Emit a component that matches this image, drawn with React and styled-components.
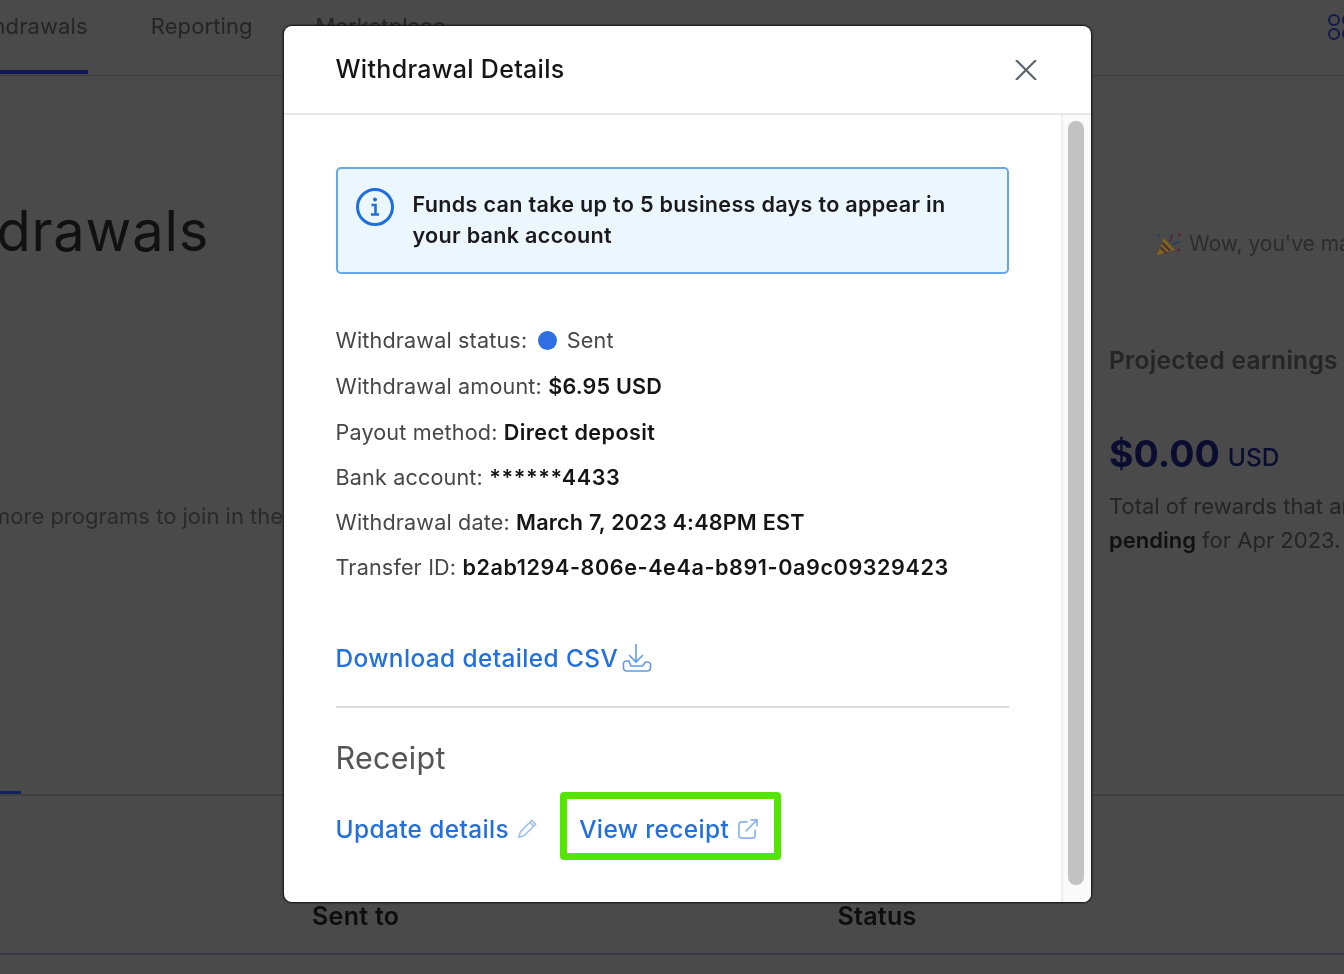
import styled, { createGlobalStyle } from "styled-components";

const GlobalStyle = createGlobalStyle`
  html, body {
    margin: 0;
    padding: 0;
    background: #4a4a4a;
    font-family: "Inter", "Liberation Sans", sans-serif;
    overflow: hidden;
  }
  * { box-sizing: border-box; }
`;

const Screen = styled.div`
  position: relative;
  width: 1344px;
  height: 974px;
  overflow: hidden;
  background: #4a4a4a;
  filter: blur(0.45px);
`;

/* dimmed dashboard behind the modal */
const TopNav = styled.div`
  height: 76px;
  border-bottom: 1px solid #3e3e3e;
  display: flex;
  gap: 63px;
  margin-left: -42px;
  position: relative;
`;
const NavTab = styled.div`
  height: 74px;
  padding-top: 12px;
  font-size: 22px;
  line-height: 28px;
  color: #252525;
  letter-spacing: 0.1px;
  white-space: nowrap;
  border-bottom: 4px solid ${(p) => (p.$active ? "#10185c" : "transparent")};
`;
const GridIcon = styled.svg`
  margin-left: auto;
  margin-right: -17px;
  margin-top: 12px;
  flex: none;
`;
const TitleBand = styled.div`
  height: 241px;
  border-bottom: 1px solid #464646;
  display: flex;
  justify-content: space-between;
  margin-left: -127px;
`;
const PageTitle = styled.h1`
  margin: 120px 0 0;
  font-size: 56px;
  line-height: 70px;
  font-weight: 400;
  letter-spacing: 0.8px;
  color: #111;
`;
const Wow = styled.div`
  margin: 148px -60px 0 0;
  width: 249px;
  height: 40px;
  display: flex;
  align-items: center;
  gap: 7px;
  font-size: 21px;
  line-height: 28px;
  color: #2c2c2c;
  white-space: nowrap;
  overflow: hidden;
`;
const PartySvg = styled.svg`
  flex: none;
`;
const Middle = styled.div`
  height: 338px;
  display: flex;
  border-bottom: 1px solid #474747;
`;
const ProgramsNote = styled.div`
  flex: 1;
  margin-left: -9px;
  padding-top: 185px;
  font-size: 22px;
  line-height: 28px;
  color: #2a2a2a;
  white-space: nowrap;
  overflow: hidden;
`;
const EarningsCard = styled.div`
  width: 253px;
  overflow: hidden;
  white-space: nowrap;
`;
const CardHead = styled.div`
  height: 89px;
  padding: 28px 0 0 18px;
  border-bottom: 1px solid #464646;
  font-size: 24.5px;
  letter-spacing: 0.3px;
  line-height: 30px;
  font-weight: 600;
  color: #252525;
`;
const Amount = styled.div`
  padding: 23px 0 0 18px;
  font-size: 37.5px;
  line-height: 50px;
  font-weight: 700;
  color: #0a0c30;
`;
const AmountUnit = styled.span`
  font-size: 24.5px;
  font-weight: 500;
  margin-left: 8px;
  vertical-align: 1px;
`;
const CardText = styled.div`
  padding: 8px 0 0 18px;
  font-size: 22px;
  line-height: 33.5px;
  color: #242424;
`;
const Pending = styled.b`
  font-weight: 600;
  color: #111;
`;
const Band = styled.div`
  height: 48px;
  border-bottom: 1px solid #474747;
`;
const TabsRow = styled.div`
  height: 93px;
  border-bottom: 2px solid #404040;
  display: flex;
  align-items: flex-end;
`;
const TabMark = styled.div`
  width: 21px;
  height: 3px;
  background: #10205c;
`;
const TableHead = styled.div`
  height: 159px;
  border-bottom: 2px solid #3a3a42;
  padding: 105px 0 0 312px;
  display: flex;
  gap: 438px;
  font-size: 25px;
  letter-spacing: 0.3px;
  line-height: 30px;
  font-weight: 600;
  color: #0d0d0d;
`;

/* modal */
const Modal = styled.div`
  position: absolute;
  left: 284px;
  top: 26px;
  width: 807px;
  height: 876px;
  background: #fff;
  border-radius: 8px;
  box-shadow: 0 0 2px 1px #111;
  display: flex;
  flex-direction: column;
  overflow: hidden;
`;
const ModalHeader = styled.div`
  height: 89px;
  flex: none;
  padding: 0 52px 0 51.5px;
  display: flex;
  align-items: center;
  justify-content: space-between;
  border-bottom: 2px solid #e3e7ee;
`;
const ModalTitle = styled.h2`
  margin: 0 0 1px;
  font-size: 25px;
  font-weight: 500;
  letter-spacing: 0.3px;
  color: #151515;
`;
const CloseButton = styled.button`
  width: 22px;
  height: 20px;
  margin-right: 2px;
  padding: 0;
  border: none;
  background: none;
  display: flex;
`;
const ModalMain = styled.div`
  flex: 1;
  display: flex;
  min-height: 0;
`;
const ModalBody = styled.div`
  flex: 1;
  padding: 52px 29px 0 51.5px;
`;
const ScrollTrack = styled.div`
  width: 30px;
  flex: none;
  background: #fafafa;
  border-left: 2px solid #efefef;
  padding: 6px 0 17px 5px;
`;
const ScrollThumb = styled.div`
  width: 16px;
  height: 100%;
  border-radius: 8px;
  background: #c2c2c2;
`;
const Alert = styled.div`
  width: 673.5px;
  height: 107px;
  border: 2px solid #68a6ea;
  border-radius: 5px;
  background: #ebf6fe;
  padding: 19px 18px;
  display: flex;
  gap: 17px;
  margin-bottom: 43px;
`;
const InfoIcon = styled.svg`
  flex: none;
`;
const AlertText = styled.div`
  padding-top: 1px;
  font-size: 21.6px;
  line-height: 31px;
  font-weight: 600;
  letter-spacing: 0.29px;
  color: #1a1a1a;
`;
const InfoRow = styled.div`
  height: ${(p) => p.$h || 45}px;
  display: flex;
  align-items: center;
  font-size: 21.6px;
  letter-spacing: 0.15px;
  color: #474747;
  white-space: pre;
`;
const Strong = styled.span`
  font-weight: 600;
  letter-spacing: ${(p) => p.$spacing ?? 0.35}px;
  color: #151515;
`;
const StatusDot = styled.span`
  width: 19px;
  height: 19px;
  border-radius: 50%;
  background: #2f6fe3;
  margin: 0 10px 0 10.5px;
`;
const BlueLink = styled.a`
  font-size: 24.4px;
  line-height: 30px;
  font-weight: 500;
  letter-spacing: 0.4px;
  color: #2270e0;
  display: inline-flex;
  align-items: center;
  white-space: nowrap;
`;
const DownloadRow = styled.div`
  margin-top: 45px;
  height: 48px;
  display: flex;
  gap: 4px;
  align-items: center;
`;
const Divider = styled.div`
  height: 2px;
  width: 673.5px;
  background: #d9dce2;
  margin-top: 24px;
`;
const ReceiptTitle = styled.h3`
  margin: 32px 0 0;
  font-size: 30.5px;
  letter-spacing: 0.3px;
  line-height: 36px;
  font-weight: 400;
  color: #555;
`;
const ReceiptLinks = styled.div`
  margin-top: 16px;
  height: 68px;
  display: flex;
  align-items: center;
`;
const UpdateLink = styled(BlueLink)`
  gap: 8px;
  padding-top: 5px;
`;
const ReceiptBox = styled.div`
  margin-left: 22px;
  width: 221px;
  height: 68px;
  border: 7px solid #55e500;
  border-radius: 4px;
  padding: 5px 0 0 12px;
  display: flex;
  align-items: center;
`;
const ReceiptLink = styled(BlueLink)`
  gap: 9px;
`;

const PartyIcon = () => (
  <PartySvg width="27" height="27" viewBox="0 0 30 28">
    <path d="M2 26 10 7 22 20Z" fill="#80641c" />
    <path d="M6 17l7 7M8 12l9 9" stroke="#4a2f3a" strokeWidth="2.4" />
    <path d="M16 11c3-2 2-5 3-8" stroke="#4a2a40" strokeWidth="2" fill="none" />
    <path d="M19 14c3-2 6-2 9-3" stroke="#2a3f5c" strokeWidth="2" fill="none" />
    <circle cx="4" cy="4" r="1.5" fill="#1f3f60" />
    <circle cx="27" cy="3" r="1.5" fill="#5c2030" />
    <circle cx="26" cy="20" r="1.5" fill="#5c2030" />
  </PartySvg>
);

const App = () => {
  return (
    <Screen>
      <GlobalStyle />
      <TopNav>
        <NavTab $active>Withdrawals</NavTab>
        <NavTab>Reporting</NavTab>
        <NavTab>Marketplace</NavTab>
        <GridIcon width="34" height="30" viewBox="0 0 34 30" fill="none" stroke="#14184f" strokeWidth="2">
          <circle cx="7" cy="8" r="5" />
          <circle cx="21" cy="8" r="5" />
          <circle cx="7" cy="22" r="5" />
          <circle cx="21" cy="22" r="5" />
        </GridIcon>
      </TopNav>
      <TitleBand>
        <PageTitle>Withdrawals</PageTitle>
        <Wow>
          <PartyIcon />
          Wow, you've made it
        </Wow>
      </TitleBand>
      <Middle>
        <ProgramsNote>more programs to join in the</ProgramsNote>
        <EarningsCard>
          <CardHead>Projected earnings</CardHead>
          <Amount>
            $0.00<AmountUnit>USD</AmountUnit>
          </Amount>
          <CardText>
            Total of rewards that are
            <br />
            <Pending>pending</Pending> for Apr 2023.
          </CardText>
        </EarningsCard>
      </Middle>
      <Band />
      <TabsRow>
        <TabMark />
      </TabsRow>
      <TableHead>
        <span>Sent to</span>
        <span>Status</span>
      </TableHead>

      <Modal>
        <ModalHeader>
          <ModalTitle>Withdrawal Details</ModalTitle>
          <CloseButton aria-label="Close">
            <svg width="22" height="20" viewBox="0 0 22 20" fill="none" stroke="#5b6670" strokeWidth="2.2">
              <path d="M1 0l20 20M21 0 1 20" />
            </svg>
          </CloseButton>
        </ModalHeader>
        <ModalMain>
          <ModalBody>
            <Alert>
              <InfoIcon width="40" height="38" viewBox="0 0 40 38" fill="none">
                <circle cx="19" cy="19" r="17.5" stroke="#1f6fe0" strokeWidth="3" />
                <circle cx="19" cy="11.5" r="2" fill="#1f6fe0" />
                <path d="M15.5 17h4v9M15 26.5h8" stroke="#1f6fe0" strokeWidth="2.6" />
              </InfoIcon>
              <AlertText>
                Funds can take up to 5 business days to appear in
                <br />
                your bank account
              </AlertText>
            </Alert>
            <InfoRow $h={46}>
              Withdrawal status:
              <StatusDot />
              Sent
            </InfoRow>
            <InfoRow $h={46}>
              Withdrawal amount: <Strong $spacing={0.2}>$6.95 USD</Strong>
            </InfoRow>
            <InfoRow>
              Payout method: <Strong $spacing={0.42}>Direct deposit</Strong>
            </InfoRow>
            <InfoRow>
              Bank account: <Strong $spacing={0.6}>******4433</Strong>
            </InfoRow>
            <InfoRow>
              Withdrawal date: <Strong $spacing={0.2}>March 7, 2023 4:48PM EST</Strong>
            </InfoRow>
            <InfoRow>
              Transfer ID: <Strong $spacing={0.58}>b2ab1294-806e-4e4a-b891-0a9c09329423</Strong>
            </InfoRow>
            <DownloadRow>
              <BlueLink>Download detailed CSV</BlueLink>
              <svg width="30" height="30" viewBox="0 0 30 30" fill="none" stroke="#5f9be8" strokeWidth="1.6">
                <path d="M14 1v18M7 12l7 7 7-7" />
                <path d="M7 18H4a3 3 0 0 0-2.5 4v3a3 3 0 0 0 3 3h21a3 3 0 0 0 3-3v-2a3 3 0 0 0-3-4h-2l-3 4H9z" />
              </svg>
            </DownloadRow>
            <Divider />
            <ReceiptTitle>Receipt</ReceiptTitle>
            <ReceiptLinks>
              <UpdateLink>
                Update details
                <svg width="21" height="21" viewBox="0 0 22 22" fill="none" stroke="#9cc0f0" strokeWidth="1.6">
                  <path d="M2 20l1.5-5.5L15.5 2.5l4 4-12 12z" />
                  <path d="M13.5 4.5l4 4" />
                </svg>
              </UpdateLink>
              <ReceiptBox>
                <ReceiptLink>
                  View receipt
                  <svg width="20" height="20" viewBox="0 0 21 21" fill="none" stroke="#8cb6ee" strokeWidth="1.8">
                    <path d="M10 3H4a3 3 0 0 0-3 3v11a3 3 0 0 0 3 3h11a3 3 0 0 0 3-3v-6" />
                    <path d="M8 13 20 1M13 1h7v7" />
                  </svg>
                </ReceiptLink>
              </ReceiptBox>
            </ReceiptLinks>
          </ModalBody>
          <ScrollTrack>
            <ScrollThumb />
          </ScrollTrack>
        </ModalMain>
      </Modal>
    </Screen>
  );
};

export default App;
